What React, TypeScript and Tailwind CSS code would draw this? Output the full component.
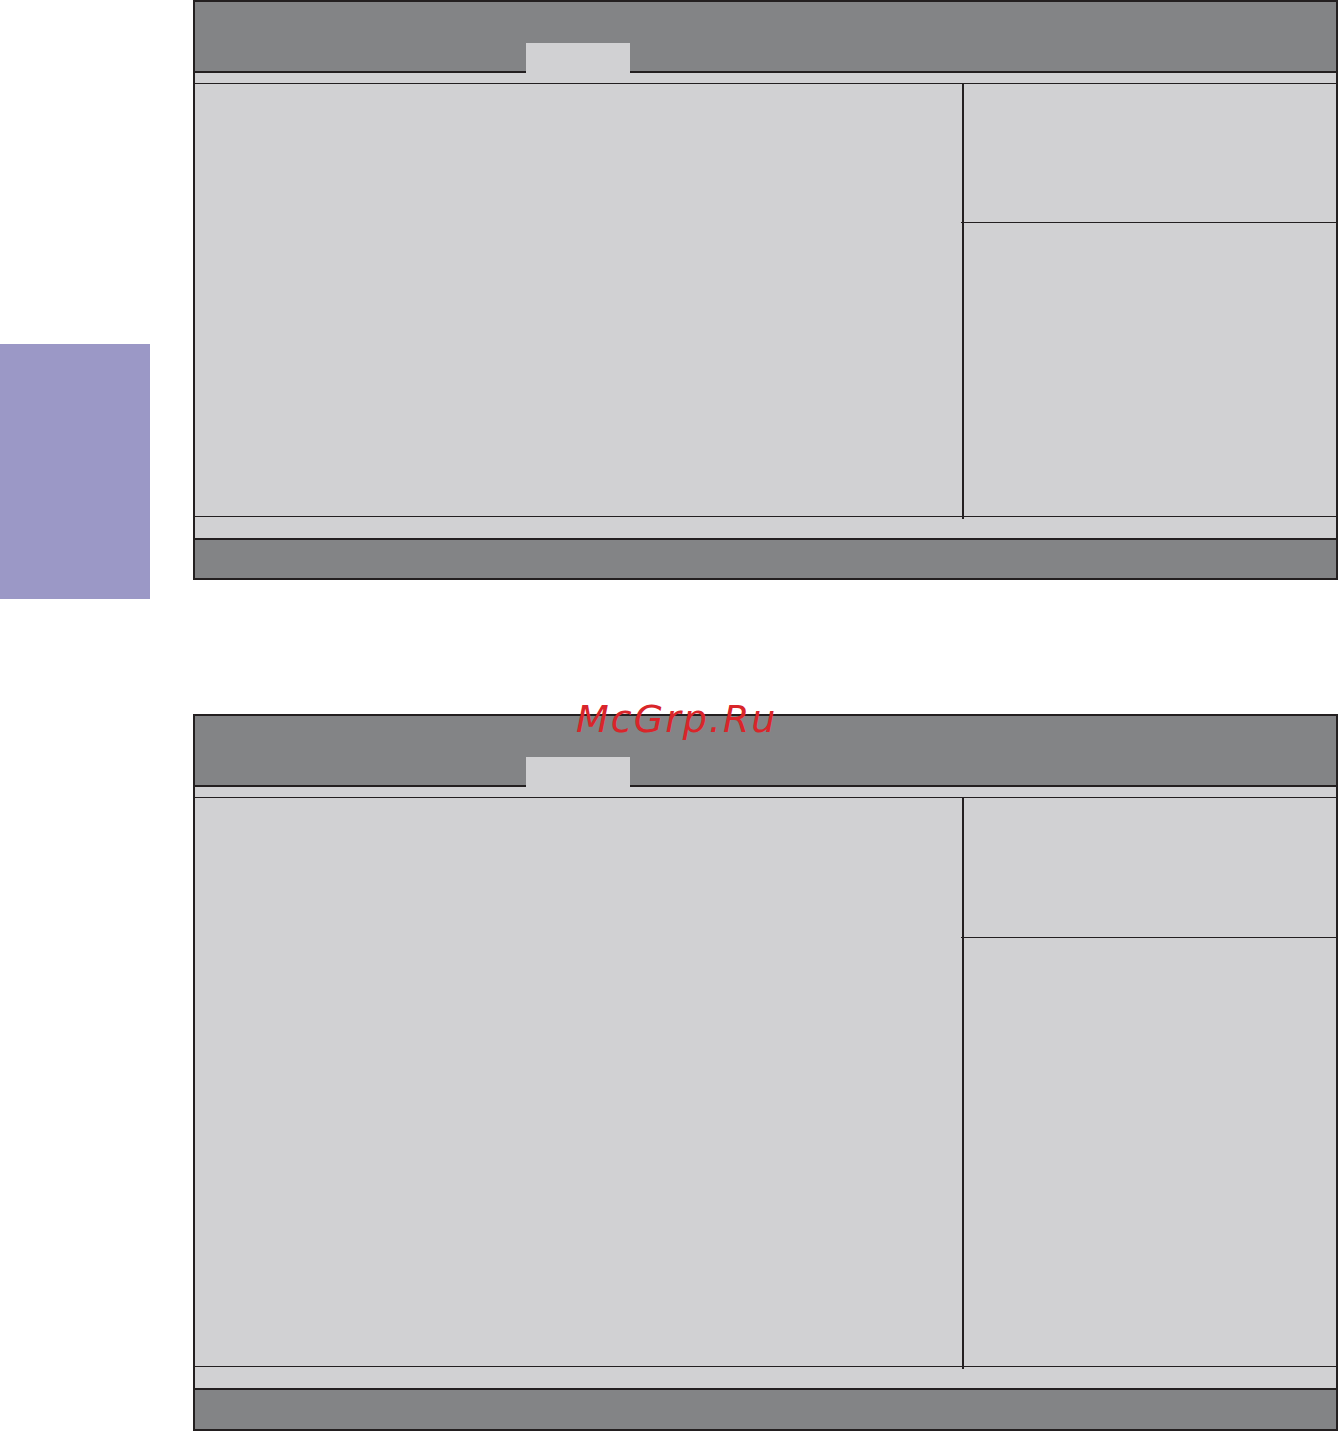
import React from "react";

// Two empty BIOS-style screen frames from a manual page, plus the side tab.

interface FrameProps {
    mainHeight: number;
    helpHeight: number;
    footerHeight: number;
}

function BiosFrame({ mainHeight, helpHeight, footerHeight }: FrameProps) {
    return (
        <div className="w-[1145px] border-2 border-[#231f20] bg-[#d1d1d3]">
            {/* Title bar with the active tab */}
            <div className="flex h-[71px] items-end bg-[#838486]">
                <div className="w-[331px] border-b-2 border-[#231f20]" />
                <div className="h-[30px] w-[104px] bg-[#d1d1d3]" />
                <div className="flex-1 border-b-2 border-[#231f20]" />
            </div>

            {/* Sub strip */}
            <div className="h-[11px] border-b border-[#231f20]" />

            {/* Main area: settings + help panel */}
            <div className="flex" style={{ height: mainHeight }}>
                <div className="w-[767px]" />
                <div className="relative w-[2px] bg-[#231f20]">
                    <div className="absolute -bottom-[3px] left-0 h-[3px] w-[2px] bg-[#231f20]" />
                </div>
                <div className="flex flex-1 flex-col">
                    <div
                        className="-ml-[3px] border-b border-[#231f20]"
                        style={{ height: helpHeight }}
                    />
                    <div className="flex-1" />
                </div>
            </div>

            {/* Status strip */}
            <div className="h-[22px] border-t border-[#231f20]" />

            {/* Key legend bar */}
            <div
                className="border-t-2 border-[#231f20] bg-[#838486]"
                style={{ height: footerHeight + 2 }}
            />
        </div>
    );
}

export default function App() {
    return (
        <div className="relative h-[1432px] w-[1338px] bg-white">
            <div className="flex">
                {/* Chapter side tab */}
                <div className="w-[193px] shrink-0">
                    <div className="mt-[344px] h-[255px] w-[150px] bg-[#9b98c6]" />
                </div>

                <div className="flex flex-col">
                    <BiosFrame mainHeight={432} helpHeight={139} footerHeight={38} />
                    <div className="mt-[134px]">
                        <BiosFrame mainHeight={568} helpHeight={140} footerHeight={39} />
                    </div>
                </div>
            </div>

            {/* Watermark */}
            <div
                className="absolute left-[576px] top-[700px] text-[38px] italic leading-none tracking-[2px] text-[#d9252a]"
                style={{ fontFamily: '"DejaVu Sans", Verdana, sans-serif' }}
            >
                McGrp.Ru
            </div>
        </div>
    );
}
